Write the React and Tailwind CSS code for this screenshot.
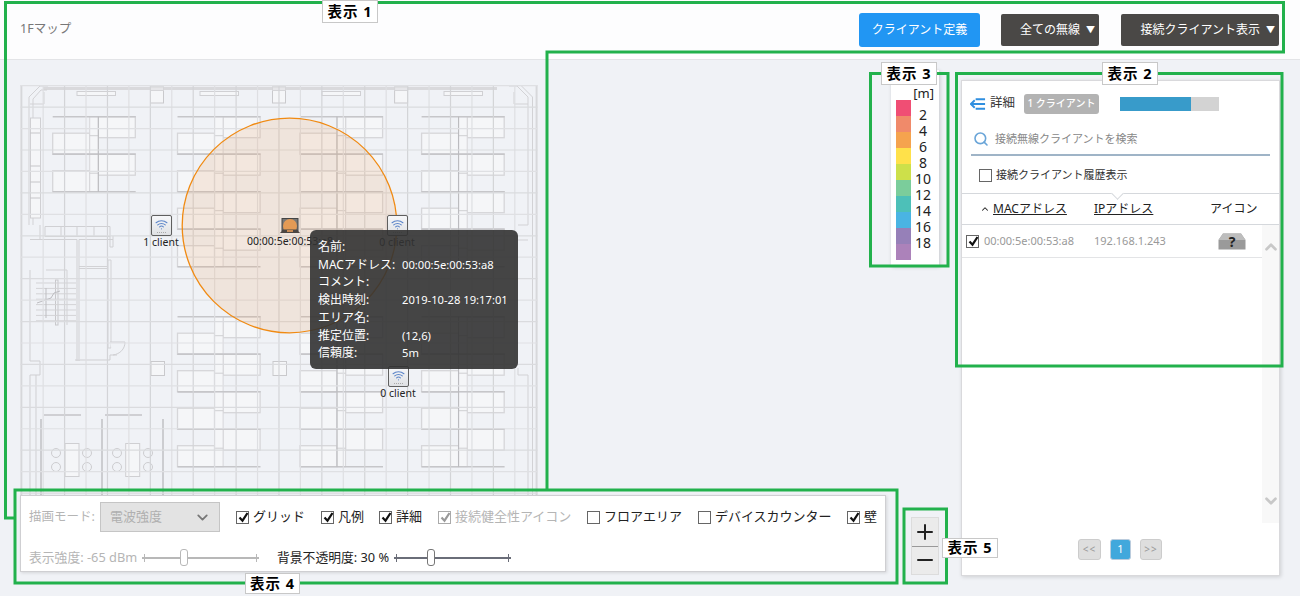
import { ChevronDown, ChevronUp, Minus, Plus, Search, Wifi } from "lucide-react"

const colStep = 21.44
const gridX = Array.from({ length: 25 }, (_, i) => 21.7 + i * colStep)
const gridY = Array.from({ length: 22 }, (_, i) => 85.7 + i * colStep)

const legend = [
  ["#f04e74", "2"],
  ["#f08a6a", "4"],
  ["#f5a34e", "6"],
  ["#ffe14a", "8"],
  ["#cde04a", "10"],
  ["#7bcd9b", "12"],
  ["#4dc0b8", "14"],
  ["#4ab4e3", "16"],
  ["#9680b8", "18"],
  ["#ac82ba", ""],
]

const tooltip = [
  ["名前:", ""],
  ["MACアドレス:", "00:00:5e:00:53:a8"],
  ["コメント:", ""],
  ["検出時刻:", "2019-10-28 19:17:01"],
  ["エリア名:", ""],
  ["推定位置:", "(12,6)"],
  ["信頼度:", "5m"],
]

// one block of desks in the floor plan
const Desks = ({ x, y, pairs, darkLeft }) => (
  <g>
    {Array.from({ length: pairs }, (_, i) => {
      const t = y + i * 37.5
      return (
        <g key={i}>
          <rect x={x + 45.6} y={t} width={37} height={21} fill="#f5f6f8" stroke="#d6d6d9" strokeWidth="1.3" />
          <rect x={x} y={t + 16.5} width={37} height={21} fill="#f5f6f8" stroke="#d6d6d9" strokeWidth="1.3" />
          <rect x={x + 37} y={t} width={8.6} height={37.5} fill="#f5f6f8" stroke="#d6d6d9" strokeWidth="1" />
          <path d={`M${x + 37} ${t + 19}h8.6`} stroke="#cfcfd2" />
          <path d={`M${x} ${t}h83M${x} ${t + 37.5}h83`} stroke="#c6c6c9" strokeWidth="1.6" />
        </g>
      )
    })}
    <path d={`M${darkLeft ? x + 37 : x + 45.6} ${y}v${pairs * 37.5}`} stroke="#b9b9bc" />
  </g>
)

const FloorPlan = () => (
  <svg viewBox="0 85 540 451" className="block w-[540px] h-[451px]" fill="none">
    <rect x="20.5" y="85.5" width="517" height="460" fill="#f0f2f6" stroke="#e2e3e6" />
    {/* walls */}
    <path d="M43 88.5H497" stroke="#d9d9dc" strokeWidth="3" />
    <path d="M29 225V97l11-11h8M33 225V99l8-9h6M44 92v12H30" stroke="#d2d2d5" />
    <path d="M528 225V97l-11-11h-8M532.5 540V97l-11-11M514 92v12h14M528 225h-10M518 225v0M518 368v7h10v165M518 240h10" stroke="#d2d2d5" />
    {[77, 200, 322, 444].map((x) => (
      <rect key={x} x={x} y="91.5" width="38.5" height="4" fill="#f5f6f8" stroke="#d0d0d3" />
    ))}
    {[150.5, 272.5, 394.6].map((x) => (
      <g key={x}>
        <rect x={x} y="87" width="13" height="16" fill="#f5f6f8" stroke="#c9c9cc" />
        <rect x={x} y="87" width="13" height="3.5" fill="#e6e6e9" stroke="#d5d5d8" />
      </g>
    ))}
    {[151, 273].map((x) => (
      <rect key={x} x={x} y="361.5" width="13.5" height="14" fill="#f5f6f8" stroke="#c9c9cc" />
    ))}
    {/* lockers on the left */}
    <rect x="30.5" y="118" width="10" height="100" fill="#f5f6f8" stroke="#d0d0d3" />
    <path d="M30 133h10M30 166h10M30 182h10M30 198h10" stroke="#c6c6c9" />
    {/* lobby and stairs */}
    <path d="M40 225v14M30 239.5h47V361M79 239.5h34M79 239.5V361M45 226.5h65v10H45zM61 226.5v10M77 226.5v10M94 226.5v10M110 236v11h3v-11" stroke="#d0d0d3" />
    <path d="M79 266.5h29M79 268.5h29M108 260h3v88h-3zM46 270h21v55" stroke="#d2d2d5" />
    <rect x="55.5" y="280" width="2.5" height="45" stroke="#c8c8cb" />
    {Array.from({ length: 8 }, (_, i) => (
      <path key={i} d={`M36 ${283 + i * 5.4}h40`} stroke="#d3d3d6" />
    ))}
    <path d="M37 303l14-5 3-5 6-2M46 288v30" stroke="#bdbdc1" />
    <path d="M75 360h35v-5h7M110 342h15c0 7-5 12-12 13" stroke="#cfcfd2" fill="#f0f2f6" />
    <path d="M30 270v91h10v14H30v165M36 375v165" stroke="#cfcfd2" />
    {/* meeting rooms */}
    <path d="M41 419v80M102 419v80M163 419v80" stroke="#c4c4c7" strokeWidth="1.6" />
    <path d="M44 415h37M105 415h37" stroke="#c4c4c7" strokeWidth="1.6" />
    {[65, 125.7].map((x) => (
      <rect key={x} x={x} y="443.5" width="14" height="33" fill="#f5f6f8" stroke="#cfcfd2" />
    ))}
    {[56, 87, 117, 148].flatMap((x) =>
      [453, 467].map((y) => <circle key={`${x}-${y}`} cx={x} cy={y} r="4.5" stroke="#cdcdd0" />)
    )}
    {/* desks */}
    <Desks x={52.7} y={116.7} pairs={2} />
    {[177.5, 300, 421.6].flatMap((x) => [
      <Desks key={`${x}-a`} x={x} y={116.7} pairs={4} darkLeft />,
      <Desks key={`${x}-b`} x={x} y={316.7} pairs={4} darkLeft />,
    ])}
    {/* grid */}
    {gridX.map((x, i) => (
      <path key={x} d={`M${x} 85.5V540`} stroke={i % 2 ? "#dedfe2" : "#d3d4d7"} strokeWidth="1.2" />
    ))}
    {gridY.map((y, i) => (
      <path key={y} d={`M20.5 ${y}H537.5`} stroke={i % 2 ? "#dadbde" : "#dfe0e3"} strokeWidth="1.2" />
    ))}
    {/* detection range */}
    <circle cx="289.5" cy="225.5" r="107.3" fill="#f0a060" fillOpacity="0.17" stroke="#f08a12" strokeWidth="1.3" />
  </svg>
)

const ApPin = ({ className, label }) => (
  <div className={`absolute flex flex-col items-center w-[60px] ${className}`}>
    <div className="flex flex-col items-center w-[21px] h-[21px] rounded-[2px] border border-[#5f5f5f] bg-gradient-to-b from-[#f6f7f9] to-[#dfe1e4]">
      <Wifi size={13} strokeWidth={2} className="text-[#5d86c9] mt-[2px]" />
      <div className="w-[9px] mt-[1px] border-t border-dotted border-[#aaa]" />
    </div>
    <span className="text-[10.5px] leading-[13px] text-[#222] whitespace-nowrap">{label}</span>
  </div>
)

const CheckBox = ({ checked, disabled, className = "" }) => (
  <span
    className={`relative inline-block shrink-0 w-[13px] h-[13px] border bg-white ${disabled ? "border-[#aaa]" : "border-[#666]"} ${className}`}
  >
    {checked && (
      <svg viewBox="0 0 13 13" className="absolute left-0 top-[-1px] w-[13px] h-[13px]">
        <path d="M2.5 6.5l3 3.2 5-7.7" fill="none" stroke={disabled ? "#999" : "#111"} strokeWidth="2.2" />
      </svg>
    )}
  </span>
)

const Option = ({ label, checked, disabled, className }) => (
  <label className={`flex items-center gap-[4px] text-[13px] whitespace-nowrap ${disabled ? "text-[#b5b5b5]" : "text-[#222]"} ${className}`}>
    <CheckBox checked={checked} disabled={disabled} />
    {label}
  </label>
)

const Slider = ({ thumb, muted, className }) => (
  <div className={`relative h-[12px] w-[117px] ${className}`}>
    <div className={`absolute left-0 right-0 top-[5px] h-[1.5px] ${muted ? "bg-[#b8b8b8]" : "bg-[#6a6d78]"}`} />
    <div className={`absolute left-[2px] top-[2px] w-px h-[8px] ${muted ? "bg-[#b8b8b8]" : "bg-[#6a6d78]"}`} />
    <div className={`absolute right-[2px] top-[2px] w-px h-[8px] ${muted ? "bg-[#b8b8b8]" : "bg-[#6a6d78]"}`} />
    <div
      className={`absolute top-[-3px] w-[8px] h-[17px] rounded-[3px] bg-white border ${muted ? "border-[#b8b8b8]" : "border-[#777]"}`}
      style={{ left: thumb }}
    />
  </div>
)

const Callout = ({ className, children }) => (
  <div className={`absolute flex items-center justify-center bg-white border border-[#c8c8c8] text-[14.5px] font-bold tracking-[1px] text-black ${className}`}>
    {children}
  </div>
)

const Annotations = () => (
  <>
    <svg viewBox="0 0 1300 596" className="absolute inset-0 w-[1300px] h-[596px] pointer-events-none" fill="none" stroke="#22b14c" strokeWidth="3">
      <path d="M15 518H5.5V2.5H1283.5V52H547V490" />
      <rect x="15" y="490" width="882" height="93" />
      <rect x="956.5" y="73.5" width="325.5" height="292.5" />
      <rect x="870.5" y="73.5" width="77.5" height="192.5" />
      <rect x="904" y="509" width="42.5" height="74" />
    </svg>
    <Callout className="left-[322px] top-0 w-[56px] h-[23px]">表示 1</Callout>
    <Callout className="left-[1102px] top-[62px] w-[56px] h-[23px]">表示 2</Callout>
    <Callout className="left-[881px] top-[62px] w-[56px] h-[23px]">表示 3</Callout>
    <Callout className="left-[245px] top-[573px] w-[55px] h-[21px]">表示 4</Callout>
    <Callout className="left-[942px] top-[538px] w-[56px] h-[20px]">表示 5</Callout>
  </>
)

const App = () => {
  return (
    <div className="relative w-[1300px] h-[596px] overflow-hidden bg-[#f0f2f6] font-['Noto_Sans','Noto_Sans_CJK_JP',sans-serif]">
      <header className="flex items-center h-[60px] pl-[20px] pr-[21px] bg-[#fdfdfe] border-b border-[#e3e4e7]">
        <h1 className="text-[12.5px] text-[#777] font-normal">1Fマップ</h1>
        <button className="ml-auto w-[121px] h-[34px] rounded-[3px] bg-[#2196f3] text-white text-[12px]">クライアント定義</button>
        <button className="flex items-center justify-end gap-[6px] pr-[4px] ml-[21px] w-[98px] h-[32px] rounded-[2px] bg-[#4a4846] text-white text-[12px]">
          全ての無線
          <span className="w-[9px] text-center text-[9px]">▼</span>
        </button>
        <button className="flex items-center justify-end gap-[6px] pr-[4px] ml-[22px] w-[158px] h-[32px] rounded-[2px] bg-[#4a4846] text-white text-[12px]">
          接続クライアント表示
          <span className="w-[9px] text-center text-[9px]">▼</span>
        </button>
      </header>

      <main className="flex h-[536px]">
        <section className="relative w-[891px] pt-[25px]">
          <FloorPlan />

          <ApPin className="left-[131px] top-[155px]" label="1 client" />
          <ApPin className="left-[367px] top-[155px]" label="0 client" />
          <ApPin className="left-[368px] top-[306px]" label="0 client" />

          {/* client marker */}
          <div className="absolute left-[240px] top-[158px] w-[100px] flex flex-col items-center">
            <svg viewBox="0 0 20 15" className="w-[20px] h-[15px]">
              <rect x="2" y="0.5" width="16" height="12" fill="#777" stroke="#444" />
              <circle cx="10" cy="8" r="7" fill="#e39a55" />
              <path d="M0 15l3-3.5h14l3 3.5z" fill="#4b4642" />
              <path d="M7 12h6v2H7z" fill="#c98a52" />
            </svg>
            <span className="text-[10.5px] leading-[13px] mt-[2px] text-[#222] whitespace-nowrap">00:00:5e:00:53:a8</span>
          </div>

          {/* tooltip */}
          <div className="absolute left-[310px] top-[170px] w-[208px] h-[139px] pt-[8px] pl-[8px] rounded-[6px] bg-[#323232]/90 text-white text-[12px] leading-[17.7px]">
            {tooltip.map(([name, value]) => (
              <div key={name} className="flex whitespace-nowrap">
                <span className="w-[84px]">{name}</span>
                <span className="text-[11.2px]">{value}</span>
              </div>
            ))}
          </div>

          {/* display options */}
          <div className="absolute left-[20px] top-[435px] w-[866px] h-[77px] pt-[6px] pl-[8px] bg-white border border-[#cfcfd2] shadow-[1px_1px_3px_rgba(0,0,0,0.12)]">
            <div className="flex items-center h-[30px]">
              <span className="w-[68px] text-[12.5px] text-[#b5b5b5] whitespace-nowrap">描画モード:</span>
              <div className="flex items-center justify-between ml-[3px] w-[120px] h-[30px] pl-[9px] pr-[8px] bg-[#e3e3e3] border border-[#c5c5c5] text-[13px] text-[#b0b0b0]">
                電波強度
                <ChevronDown size={17} strokeWidth={2.5} className="text-[#777]" />
              </div>
              <Option className="ml-[16px] w-[85px]" label="グリッド" checked />
              <Option className="w-[58px]" label="凡例" checked />
              <Option className="w-[59px]" label="詳細" checked />
              <Option className="w-[149px]" label="接続健全性アイコン" checked disabled />
              <Option className="w-[111px]" label="フロアエリア" />
              <Option className="w-[149px]" label="デバイスカウンター" />
              <Option label="壁" checked />
            </div>
            <div className="flex items-center mt-[16px] h-[20px] text-[12.8px] whitespace-nowrap">
              <span className="w-[108px] text-[#b5b5b5]">表示強度: -65 dBm</span>
              <Slider className="ml-[5px]" thumb={38} muted />
              <span className="ml-[18px] w-[112px] text-[#222]">背景不透明度: 30 %</span>
              <Slider className="ml-[5px]" thumb={33} />
            </div>
          </div>

          {/* zoom */}
          <div className="absolute left-[911px] top-[457px] z-10 flex flex-col w-[28px] h-[58px] bg-[#ebebeb] border border-[#dcdcdc] text-[#222]">
            <button className="flex flex-1 items-center justify-center border-b border-[#999]">
              <Plus size={24} strokeWidth={2} />
            </button>
            <button className="flex flex-1 items-center justify-center">
              <Minus size={24} strokeWidth={2} />
            </button>
          </div>
        </section>

        {/* legend */}
        <aside className="mt-[10px] w-[48px] h-[196px] pt-[16px] pl-[5px] pr-[5px] bg-white shadow-[1px_1px_4px_rgba(0,0,0,0.18)] self-start">
          <div className="text-right text-[13px] leading-[14px] text-[#222]">[m]</div>
          <div className="flex flex-col">
            {legend.map(([color, value]) => (
              <div key={color} className="flex items-center h-[16px]">
                <span className="w-[15px] h-[15.5px] mb-[0.5px]" style={{ backgroundColor: color }} />
                <span className="flex-1 text-center text-[14px] leading-[16px] text-[#222] translate-y-[7px] pl-[1px]">{value}</span>
              </div>
            ))}
          </div>
        </aside>

        {/* detail panel */}
        <aside className="relative flex flex-col self-start ml-[22px] mt-[20px] w-[319px] h-[496px] bg-white border border-[#d9d9dc] shadow-[1px_1px_4px_rgba(0,0,0,0.15)]">
          <div className="flex items-center h-[44px] pt-[1px] pl-[8px]">
            <svg viewBox="0 0 17 12" className="w-[16px] h-[12px]" fill="none" stroke="#2f8fe0" strokeWidth="2">
              <path d="M6 1H16M1 6H16M6 11H16" />
              <path d="M5 2L1 6l4 4" />
            </svg>
            <span className="ml-[4px] text-[12.5px] text-[#333]">詳細</span>
            <span className="flex items-center justify-center ml-[9px] w-[75px] h-[20px] rounded-[3px] bg-[#b3b3b3] text-white text-[10px] font-medium">1 クライアント</span>
            <div className="ml-[21px] w-[99px] h-[14px] bg-[#d3d3d3]">
              <div className="h-full bg-[#389bca]" style={{ width: "72%" }} />
            </div>
          </div>
          <div className="flex items-center mx-[9px] h-[31px] border-b-2 border-[#9fb4c7] pl-[2px] pb-[1px]">
            <Search size={16} strokeWidth={2.4} className="text-[#6aa5d8]" />
            <span className="ml-[6px] text-[11px] text-[#888]">接続無線クライアントを検索</span>
          </div>
          <label className="flex items-center gap-[4px] pl-[17px] h-[37px] pt-[2px] text-[11px] text-[#333]">
            <CheckBox />
            接続クライアント履歴表示
          </label>
          <div className="relative flex items-center h-[32px] border-y border-[#d5d8dc] text-[12px] text-[#222]">
            <div className="absolute left-[151px] top-[-5px] w-[9px] h-[9px] rotate-45 bg-white border-r border-b border-[#d5d8dc]" />
            <ChevronUp size={10} strokeWidth={2.5} className="ml-[18px]" />
            <span className="ml-[3px] w-[101px] underline">MACアドレス</span>
            <span className="w-[116px] underline">IPアドレス</span>
            <span>アイコン</span>
          </div>
          <div className="flex flex-1 min-h-0">
            <div className="flex-1 min-w-0">
              <div className="flex items-center h-[33px] border-b border-[#e3e4e6] pl-[4px] text-[11px] text-[#999]">
                <CheckBox checked />
                <span className="ml-[5px] w-[110px]">00:00:5e:00:53:a8</span>
                <span className="w-[124px]">192.168.1.243</span>
                <svg viewBox="0 0 28 17" className="w-[28px] h-[17px]">
                  <path d="M5 0.5H23L27.5 7V16.5H0.5V7Z" fill="#9a9a9a" />
                  <path d="M5 0.5H23L27.5 7H0.5Z" fill="#bdbdbd" />
                  <text x="14" y="13.5" textAnchor="middle" fontSize="14" fontWeight="700" fill="#222">?</text>
                </svg>
              </div>
            </div>
            <div className="flex flex-col items-center justify-between w-[17px] h-[298px] py-[13px] bg-[#f8f8f8] text-[#c8c8c8]">
              <ChevronUp size={18} strokeWidth={3.5} />
              <ChevronDown size={18} strokeWidth={3.5} />
            </div>
          </div>
          <div className="flex items-center pl-[116px] gap-[9px] h-[52px] text-[#999]">
            <button className="w-[23px] h-[21px] rounded-[3px] bg-[#dedede] border border-[#ccc] text-[10px] tracking-[1px]">&lt;&lt;</button>
            <button className="w-[21px] h-[21px] rounded-[3px] bg-[#41a8dc] border border-[#bcd] text-white text-[11px]">1</button>
            <button className="w-[22px] h-[21px] rounded-[3px] bg-[#dedede] border border-[#ccc] text-[10px] tracking-[1px]">&gt;&gt;</button>
          </div>
        </aside>
      </main>

      <Annotations />
    </div>
  )
}

export default App
